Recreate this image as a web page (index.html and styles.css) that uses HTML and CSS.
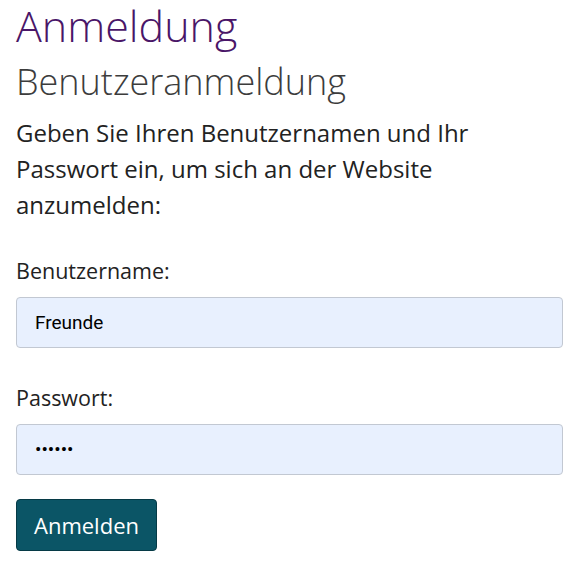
FILE: index.html
```html
<!DOCTYPE html>
<html lang="de">
<head>
<meta charset="utf-8">
<title>Anmeldung</title>
<link rel="stylesheet" href="styles.css">
</head>
<body>
<main class="page">
  <h1 class="title">Anmeldung</h1>
  <h2 class="subtitle">Benutzeranmeldung</h2>
  <p class="intro">Geben Sie Ihren Benutzernamen und Ihr Passwort ein, um sich an der Website anzumelden:</p>
  <form class="login">
    <div class="field">
      <label class="label" for="user">Benutzername:</label>
      <input class="input" id="user" type="text" value="Freunde">
    </div>
    <div class="field">
      <label class="label" for="pw">Passwort:</label>
      <input class="input" id="pw" type="password" value="123456">
    </div>
    <button class="btn" type="button">Anmelden</button>
  </form>
</main>
</body>
</html>
```
FILE: styles.css
```css
html, body {
  margin: 0;
  padding: 0;
  background: #fff;
}
body {
  font-family: "Open Sans", "Noto Sans", sans-serif;
  color: #222;
}
.page {
  padding: 0 13px 0 16px;
}
.title {
  margin: -4px 0 -4px;
  font-size: 43px;
  font-weight: 300;
  line-height: 60px;
  color: #4a1668;
}
.subtitle {
  margin: 0;
  font-size: 36px;
  font-weight: 300;
  line-height: 60px;
  color: #3c3c3c;
}
.intro {
  margin: 3px 0 0;
  font-size: 24px;
  line-height: 36px;
  color: #222;
}
.login {
  margin-top: 33px;
}
.field {
  display: flex;
  flex-direction: column;
  margin-bottom: 35px;
}
.field + .field {
  margin-bottom: 24px;
}
.label {
  font-size: 21.5px;
  line-height: 30px;
  color: #222;
  margin-bottom: 11px;
}
.input {
  box-sizing: border-box;
  height: 51px;
  width: 100%;
  border: 1px solid #c2c8d2;
  border-radius: 4px;
  background: #e8f0fe;
  padding: 0 18px;
  font-family: Roboto, sans-serif;
  font-size: 19px;
  color: #000;
  outline: none;
}
.btn {
  display: block;
  height: 52px;
  width: 141px;
  padding: 0;
  border: 1px solid #063a46;
  border-radius: 4px;
  background: #0b5566;
  color: #fff;
  font-family: "Open Sans", sans-serif;
  font-size: 22px;
}
```
